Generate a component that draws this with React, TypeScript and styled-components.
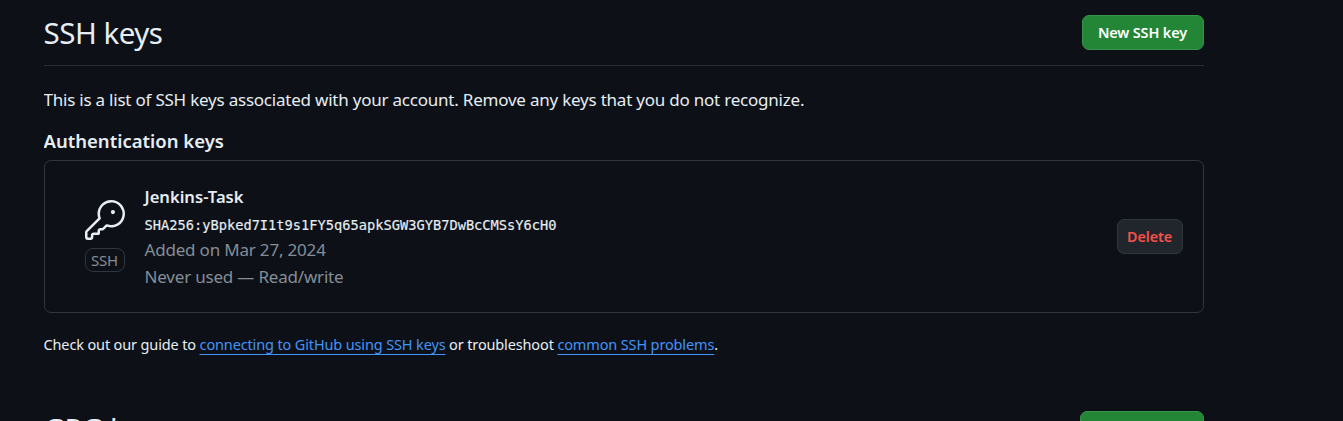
import React from 'react';
import styled, { createGlobalStyle } from 'styled-components';
import { GoKey } from 'react-icons/go';

const Global = createGlobalStyle`
  * { box-sizing: border-box; }
  html, body { margin: 0; background: #0d1117; overflow: hidden; }
  body {
    color: #e6edf3;
    font-family: "Noto Sans", "Open Sans", sans-serif;
  }
  h2, h3, p { margin: 0; }
`;

const Page = styled.main`
  width: 1160px;
  height: 421px;
  margin-left: 43.5px;
  overflow: hidden;
`;

const SectionHeader = styled.header`
  display: flex;
  justify-content: space-between;
  align-items: flex-start;
  height: 51px;
  border-bottom: 1px solid #262c33;
`;

const Section = styled.section<{ $top: number }>`
  padding-top: ${p => p.$top}px;
`;

const Title = styled.h2`
  font-size: 29.5px;
  font-weight: 400;
  line-height: 36px;
  letter-spacing: -0.5px;
`;

const NewButton = styled.button<{ $width: number }>`
  width: ${p => p.$width}px;
  height: 35px;
  padding: 0;
  border: 1px solid #38924a;
  border-radius: 7px;
  background: #238636;
  color: #fff;
  font: 600 14.5px/33px "Noto Sans", sans-serif;
  letter-spacing: -0.15px;
`;

const Intro = styled.p`
  margin-top: 21px;
  font-size: 17px;
  line-height: 26px;
  letter-spacing: -0.22px;
`;

const Subtitle = styled.h3`
  margin-top: 15px;
  font-size: 18.5px;
  font-weight: 600;
  line-height: 26px;
`;

const KeyCard = styled.div`
  display: flex;
  align-items: center;
  height: 153px;
  margin-top: 6px;
  padding: 0 20px 0 40px;
  border: 1px solid #30363d;
  border-radius: 7px;
`;

const KeyKind = styled.div`
  display: flex;
  flex-direction: column;
  align-items: center;
  gap: 8px;
  width: 40px;
  margin-bottom: 2px;
  color: #e6edf3;
  svg { display: block; }
`;

const KindLabel = styled.span`
  width: 40px;
  height: 24px;
  border: 1px solid #30363d;
  border-radius: 8px;
  color: #848d97;
  font-size: 15px;
  line-height: 22px;
  letter-spacing: -0.2px;
  text-align: center;
`;

const KeyInfo = styled.div`
  flex: 1;
  margin-left: 20px;
  padding-bottom: 1px;
`;

const KeyName = styled.div`
  font-size: 16.6px;
  font-weight: 600;
  line-height: 28px;
`;

const Fingerprint = styled.code`
  display: block;
  padding-top: 4px;
  font: 400 13.7px/21px "DejaVu Sans Mono", monospace;
  -webkit-text-stroke: 0.15px currentColor;
`;

const Meta = styled.div`
  color: #848d97;
  font-size: 17px;
  line-height: 27px;
  letter-spacing: -0.19px;
`;

const DeleteButton = styled.button`
  width: 66px;
  height: 35px;
  padding: 0;
  border: 1px solid #30363d;
  border-radius: 7px;
  background: #21262d;
  color: #f85149;
  font: 600 14.3px/33px "Noto Sans", sans-serif;
  letter-spacing: -0.1px;
`;

const Help = styled.p`
  margin-top: 19px;
  font-size: 14.5px;
  line-height: 24px;
  letter-spacing: -0.14px;
`;

const Link = styled.a`
  color: #4493f8;
  text-decoration: underline;
  text-decoration-thickness: 1px;
  text-underline-offset: 4px;
`;

export default function App() {
  return (
    <Page>
      <Global />
      <Section $top={15}>
        <SectionHeader>
          <Title>SSH keys</Title>
          <NewButton $width={122}>New SSH key</NewButton>
        </SectionHeader>
        <Intro>
          This is a list of SSH keys associated with your account. Remove any keys that you do not recognize.
        </Intro>
        <Subtitle>Authentication keys</Subtitle>
        <KeyCard>
          <KeyKind>
            <GoKey size={40} />
            <KindLabel>SSH</KindLabel>
          </KeyKind>
          <KeyInfo>
            <KeyName>Jenkins-Task</KeyName>
            <Fingerprint>SHA256:yBpked7I1t9s1FY5q65apkSGW3GYB7DwBcCMSsY6cH0</Fingerprint>
            <Meta>Added on Mar 27, 2024</Meta>
            <Meta>Never used — Read/write</Meta>
          </KeyInfo>
          <DeleteButton>Delete</DeleteButton>
        </KeyCard>
        <Help>
          Check out our guide to <Link>connecting to GitHub using SSH keys</Link> or troubleshoot{' '}
          <Link>common SSH problems</Link>.
        </Help>
      </Section>
      <Section $top={55}>
        <SectionHeader>
          <Title>GPG keys</Title>
          <NewButton $width={124}>New GPG key</NewButton>
        </SectionHeader>
      </Section>
    </Page>
  );
}
